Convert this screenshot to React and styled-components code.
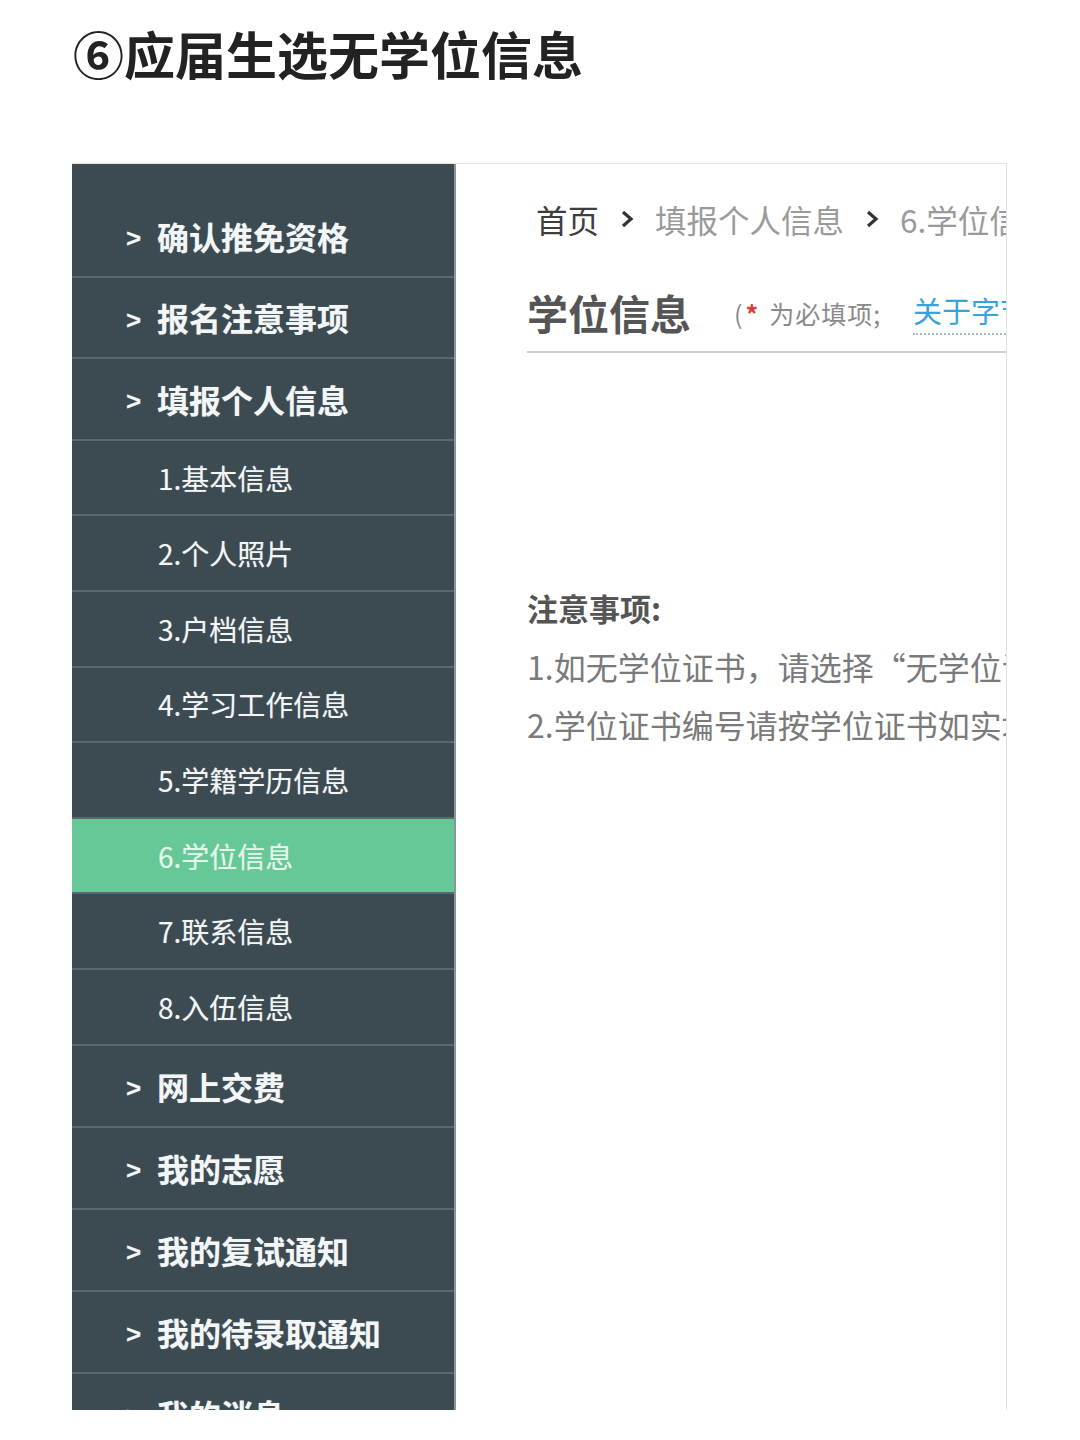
import React from "react";
import styled, { createGlobalStyle } from "styled-components";

const Global = createGlobalStyle`
  html, body { margin: 0; padding: 0; background: #ffffff; }
  body { font-family: "Noto Sans CJK SC", "Noto Sans", sans-serif; }
`;

const Page = styled.div`
  width: 1080px;
  height: 1440px;
  background: #fff;
  overflow: hidden;
`;

const Title = styled.h1`
  margin: 0;
  height: 163px;
  box-sizing: border-box;
  padding: 18px 0 0 73px;
  font-size: 51px;
  line-height: 70px;
  font-weight: 700;
  color: #222;
`;

const Frame = styled.div`
  margin-left: 72px;
  width: 935px;
  height: 1247px;
  display: flex;
  overflow: hidden;
  box-sizing: border-box;
  border-top: 1px solid #e2e2e2;
  border-right: 1px solid #e2e2e2;
`;

const Sidebar = styled.nav`
  flex: 0 0 384px;
  box-sizing: border-box;
  background: #3c4b52;
  border-right: 2px solid #8a9499;
  padding-top: 32px;
  display: flex;
  flex-direction: column;
`;

const Item = styled.div`
  flex: 0 0 auto;
  height: ${(p) => (p.$sub ? 73.6 : p.$tall ? 80 : 79.6)}px;
  border-bottom: 2px solid #5b686e;
  background: ${(p) => (p.$active ? "#66c896" : "transparent")};
  display: flex;
  align-items: center;
  padding-left: ${(p) => (p.$sub ? 86 : 54)}px;
  color: ${(p) => (p.$active ? "#e2f7ea" : "#f3f6f6")};
  font-size: ${(p) => (p.$sub ? 28 : 32)}px;
  font-weight: ${(p) => (p.$sub ? 400 : 700)};
  white-space: nowrap;
  text-shadow: 0 0 1px rgba(255, 255, 255, 0.35);
`;

const Caret = styled.span`
  font-family: "Liberation Sans", Arial, sans-serif;
  font-weight: 700;
  font-size: 26px;
  width: 31px;
  display: inline-block;
  transform: translateY(3px);
`;

const Content = styled.main`
  flex: 1;
  min-width: 0;
  overflow: hidden;
  padding-left: 71px;
  white-space: nowrap;
  background: #fff;
`;

const Crumbs = styled.div`
  margin-top: 34px;
  height: 42px;
  display: flex;
  align-items: center;
  gap: 21px;
  padding-left: 9px;
  font-size: 31.5px;
`;

const Crumb = styled.span`
  color: ${(p) => (p.$current ? "#3e3e3e" : "#9a9a9a")};
`;

const Chevron = () => (
  <svg width="14" height="20" viewBox="0 0 14 20" style={{ flex: "0 0 auto" }}>
    <polyline points="3,3 11,10 3,17" fill="none" stroke="#333" strokeWidth="3.2" />
  </svg>
);

const HeadRow = styled.div`
  margin-top: 43px;
  display: flex;
  align-items: center;
  height: 58px;
  padding-bottom: 10px;
  border-bottom: 2px solid #cfcfcf;
`;

const Heading = styled.h2`
  margin: 0 43px 0 0;
  font-size: 41px;
  font-weight: 700;
  color: #555;
  line-height: 58px;
`;

const Hint = styled.span`
  font-size: 25px;
  color: #8a8a8a;
  display: flex;
  align-items: center;
  margin-top: 2px;
  letter-spacing: 1px;
`;

const Star = styled.span`
  color: #e03a3a;
  font-weight: 700;
  margin: 0 10px 0 2px;
`;

const Link = styled.span`
  margin-left: 32px;
  font-size: 29px;
  color: #3aa2d8;
  border-bottom: 2px dotted #9fbfd0;
  padding-bottom: 2px;
`;

const Notes = styled.div`
  margin-top: 226px;
  font-size: 32px;
  line-height: 58px;
  color: #7a7a7a;
`;

const NotesTitle = styled.div`
  font-weight: 700;
  color: #555;
  font-size: 31px;
`;

const top1 = ["确认推免资格", "报名注意事项", "填报个人信息"];
const subs = ["1.基本信息", "2.个人照片", "3.户档信息", "4.学习工作信息", "5.学籍学历信息", "6.学位信息", "7.联系信息", "8.入伍信息"];
const top2 = ["网上交费", "我的志愿", "我的复试通知", "我的待录取通知", "我的消息"];

export default function App() {
  return (
    <Page>
      <Global />
      <Title>⑥应届生选无学位信息</Title>
      <Frame>
        <Sidebar>
          {top1.map((t) => (
            <Item key={t}>
              <Caret>&gt;</Caret>
              {t}
            </Item>
          ))}
          {subs.map((t) => (
            <Item key={t} $sub $active={t === "6.学位信息"}>
              {t}
            </Item>
          ))}
          {top2.map((t) => (
            <Item key={t} $tall>
              <Caret>&gt;</Caret>
              {t}
            </Item>
          ))}
        </Sidebar>
        <Content>
          <Crumbs>
            <Crumb $current>首页</Crumb>
            <Chevron />
            <Crumb>填报个人信息</Crumb>
            <Chevron />
            <Crumb>6.学位信息</Crumb>
          </Crumbs>
          <HeadRow>
            <Heading>学位信息</Heading>
            <Hint>
              (<Star>*</Star>为必填项;
            </Hint>
            <Link>关于字节数的说明</Link>
          </HeadRow>
          <Notes>
            <NotesTitle>注意事项:</NotesTitle>
            <div>1.如无学位证书，请选择“无学位证书”</div>
            <div>2.学位证书编号请按学位证书如实填写</div>
          </Notes>
        </Content>
      </Frame>
    </Page>
  );
}
